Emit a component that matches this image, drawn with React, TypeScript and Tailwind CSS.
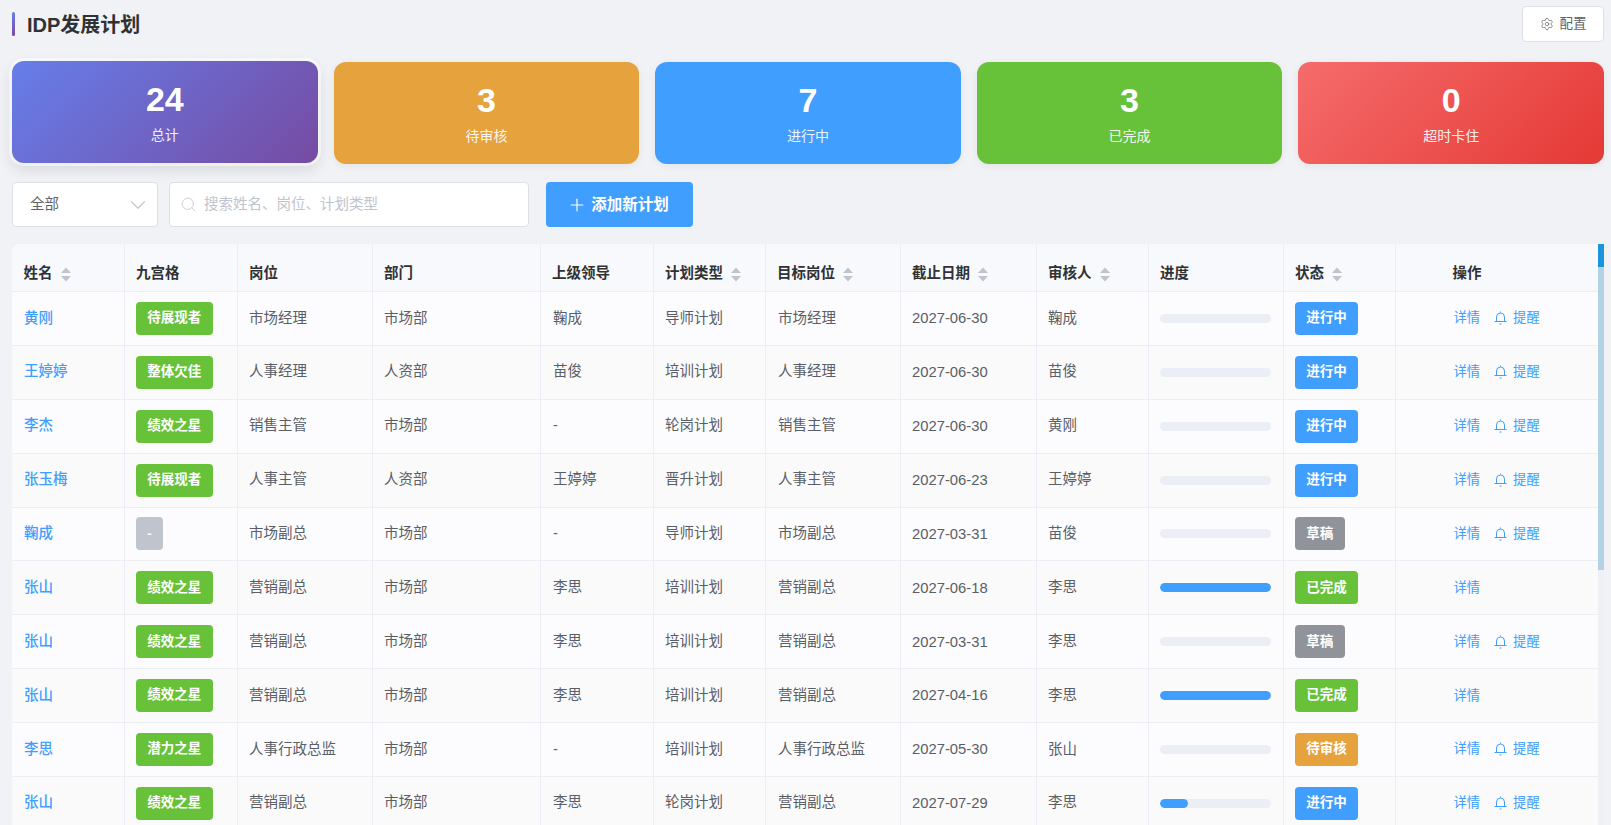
import React from 'react';
import { Settings, Search, ChevronDown, Plus } from 'lucide-react';

interface PlanRow {
  name: string;
  grid: string;
  post: string;
  dept: string;
  leader: string;
  type: string;
  target: string;
  date: string;
  reviewer: string;
  progress: number;
  status: string;
}

const rows: PlanRow[] = [
  { name: '黄刚', grid: '待展现者', post: '市场经理', dept: '市场部', leader: '鞠成', type: '导师计划', target: '市场经理', date: '2027-06-30', reviewer: '鞠成', progress: 0, status: '进行中' },
  { name: '王婷婷', grid: '整体欠佳', post: '人事经理', dept: '人资部', leader: '苗俊', type: '培训计划', target: '人事经理', date: '2027-06-30', reviewer: '苗俊', progress: 0, status: '进行中' },
  { name: '李杰', grid: '绩效之星', post: '销售主管', dept: '市场部', leader: '-', type: '轮岗计划', target: '销售主管', date: '2027-06-30', reviewer: '黄刚', progress: 0, status: '进行中' },
  { name: '张玉梅', grid: '待展现者', post: '人事主管', dept: '人资部', leader: '王婷婷', type: '晋升计划', target: '人事主管', date: '2027-06-23', reviewer: '王婷婷', progress: 0, status: '进行中' },
  { name: '鞠成', grid: '-', post: '市场副总', dept: '市场部', leader: '-', type: '导师计划', target: '市场副总', date: '2027-03-31', reviewer: '苗俊', progress: 0, status: '草稿' },
  { name: '张山', grid: '绩效之星', post: '营销副总', dept: '市场部', leader: '李思', type: '培训计划', target: '营销副总', date: '2027-06-18', reviewer: '李思', progress: 100, status: '已完成' },
  { name: '张山', grid: '绩效之星', post: '营销副总', dept: '市场部', leader: '李思', type: '培训计划', target: '营销副总', date: '2027-03-31', reviewer: '李思', progress: 0, status: '草稿' },
  { name: '张山', grid: '绩效之星', post: '营销副总', dept: '市场部', leader: '李思', type: '培训计划', target: '营销副总', date: '2027-04-16', reviewer: '李思', progress: 100, status: '已完成' },
  { name: '李思', grid: '潜力之星', post: '人事行政总监', dept: '市场部', leader: '-', type: '培训计划', target: '人事行政总监', date: '2027-05-30', reviewer: '张山', progress: 0, status: '待审核' },
  { name: '张山', grid: '绩效之星', post: '营销副总', dept: '市场部', leader: '李思', type: '轮岗计划', target: '营销副总', date: '2027-07-29', reviewer: '李思', progress: 25, status: '进行中' },
];

const statusColor: Record<string, string> = {
  进行中: 'bg-[#409eff]',
  草稿: 'bg-[#909399]',
  已完成: 'bg-[#67c23a]',
  待审核: 'bg-[#e6a23c]',
};

const columns = [
  { label: '姓名', width: 'w-[112px]', sort: true },
  { label: '九宫格', width: 'w-[113px]', sort: false },
  { label: '岗位', width: 'w-[135px]', sort: false },
  { label: '部门', width: 'w-[168px]', sort: false },
  { label: '上级领导', width: 'w-[113px]', sort: false },
  { label: '计划类型', width: 'w-[112px]', sort: true },
  { label: '目标岗位', width: 'w-[135px]', sort: true },
  { label: '截止日期', width: 'w-[136px]', sort: true },
  { label: '审核人', width: 'w-[112px]', sort: true },
  { label: '进度', width: 'w-[135px]', sort: false },
  { label: '状态', width: 'w-[112px]', sort: true },
];

const SortIcon = () => (
  <svg width="10" height="15" viewBox="0 0 10 15" className="ml-[8px] shrink-0" fill="#c0c4cc">
    <path d="M5 0.5 L10 6 L0 6 Z" />
    <path d="M5 14.5 L10 9 L0 9 Z" />
  </svg>
);

const BellIcon = () => (
  <svg width="13" height="14" viewBox="0 0 13 14" fill="none" stroke="currentColor" strokeWidth="1" className="ml-[14px] mr-[6px] shrink-0">
    <path d="M6.5 0.5v1.2" />
    <path d="M2.5 10.5V6a4 4 0 0 1 8 0v4.5" />
    <path d="M0.5 10.5h12" />
    <path d="M5.5 13h2" />
  </svg>
);

const StatCard = ({ value, label, className }: { value: number; label: string; className: string }) => (
  <div className={`flex-1 h-[102px] rounded-[12px] flex flex-col items-center text-white pt-[16px] ${className}`}>
    <div className="text-[34px] leading-[44px] font-bold">{value}</div>
    <div className="mt-[5px] text-[14px] leading-[18px] opacity-90">{label}</div>
  </div>
);

const cellBase = 'pr-[8px] text-[14.5px] text-[#5a5e66] border-r border-b border-[#ebeef5]';

export default function App() {
  return (
    <div className="h-screen overflow-hidden bg-[#f0f2f5] pl-[12px] pr-[7px] pt-[6px] font-['Liberation_Sans','Noto_Sans_CJK_SC',sans-serif]">
      <div className="flex items-center justify-between h-[36px]">
        <div className="flex items-center">
          <div className="w-[3px] h-[24px] rounded-[2px] bg-gradient-to-b from-[#667eea] to-[#764ba2]" />
          <h1 className="ml-[12px] pt-[1px] text-[20px] font-bold text-[#303133]">IDP发展计划</h1>
        </div>
        <button className="w-[82px] h-[36px] bg-white border border-[#dcdfe6] rounded-[4px] flex items-center justify-center text-[13.5px] text-[#606266]">
          <Settings size={14} strokeWidth={1.2} className="mr-[6px]" />
          配置
        </button>
      </div>

      <div className="flex gap-[16px] mt-[20px]">
        <StatCard value={24} label="总计" className="bg-[linear-gradient(135deg,#667eea,#764ba2)] -translate-y-[1px] shadow-[0_0_0_3px_rgba(255,255,255,0.55),0_6px_16px_rgba(0,0,0,0.12)]" />
        <StatCard value={3} label="待审核" className="bg-[#e6a23c] shadow-[0_2px_8px_rgba(0,0,0,0.06)]" />
        <StatCard value={7} label="进行中" className="bg-[#409eff] shadow-[0_2px_8px_rgba(0,0,0,0.06)]" />
        <StatCard value={3} label="已完成" className="bg-[#67c23a] shadow-[0_2px_8px_rgba(0,0,0,0.06)]" />
        <StatCard value={0} label="超时卡住" className="bg-[linear-gradient(135deg,#f56c6c,#e53935)] shadow-[0_2px_8px_rgba(0,0,0,0.06)]" />
      </div>

      <div className="flex items-center mt-[18px] h-[45px]">
        <div className="w-[146px] h-full bg-white border border-[#dcdfe6] rounded-[4px] flex items-center justify-between pl-[17px] pr-[6px] text-[14.5px] text-[#606266]">
          全部
          <ChevronDown size={26} strokeWidth={1} className="text-[#c0c4cc]" />
        </div>
        <div className="ml-[11px] w-[360px] h-full bg-white border border-[#dcdfe6] rounded-[4px] flex items-center pl-[10px] text-[14.5px] text-[#c0c4cc]">
          <Search size={17} strokeWidth={1.1} className="mr-[7px]" />
          搜索姓名、岗位、计划类型
        </div>
        <button className="ml-[17px] w-[147px] h-full bg-[#409eff] rounded-[4px] flex items-center justify-center pr-[3px] text-white text-[15.5px] font-bold">
          <Plus size={20} strokeWidth={1.4} className="mr-[4px]" />
          添加新计划
        </button>
      </div>

      <div className="flex mt-[17px] items-start">
        <div className="w-[1586px] shrink-0 rounded-tl-[8px] overflow-hidden">
          <table className="w-full table-fixed border-collapse bg-white">
            <colgroup>
              {columns.map((c) => (
                <col key={c.label} className={c.width} />
              ))}
              <col />
            </colgroup>
            <thead>
              <tr className="h-[47.5px] bg-[#f8f9fc]">
                {columns.map((c) => (
                  <th key={c.label} className="pl-[11.5px] pr-[4px] pt-[13px] border-r border-b border-[#ebeef5] text-left text-[14.5px] font-bold text-[#303133]">
                    <span className="flex items-center">
                      {c.label}
                      {c.sort && <SortIcon />}
                    </span>
                  </th>
                ))}
                <th className="pl-[57px] pt-[13px] border-b border-[#ebeef5] text-left text-[14.5px] font-bold text-[#303133]">操作</th>
              </tr>
            </thead>
            <tbody>
              {rows.map((row, i) => (
                <tr key={i} className={`h-[53.88px] ${i % 2 === 1 ? 'bg-[#fafafa]' : 'bg-[#fcfcfe]'}`}>
                  <td className="px-[12px] border-r border-b border-[#ebeef5] text-[14.5px] font-medium text-[#409eff]">{row.name}</td>
                  <td className="pl-[11.5px] border-r border-b border-[#ebeef5]">
                    <span className={`inline-flex items-center justify-center min-w-[27px] h-[33px] px-[11.25px] rounded-[4px] text-[13.5px] font-bold text-white align-middle ${row.grid === '-' ? 'bg-[#c0c4cc]' : 'bg-[#67c23a]'}`}>
                      {row.grid}
                    </span>
                  </td>
                  <td className={`pl-[11.5px] ${cellBase}`}>{row.post}</td>
                  <td className={`pl-[11.5px] ${cellBase}`}>{row.dept}</td>
                  <td className={`pl-[12.5px] ${cellBase}`}>{row.leader}</td>
                  <td className={`pl-[11.5px] ${cellBase}`}>{row.type}</td>
                  <td className={`pl-[12.5px] ${cellBase}`}>{row.target}</td>
                  <td className={`pl-[11.5px] ${cellBase} text-[14.8px]`}>{row.date}</td>
                  <td className={`pl-[11.5px] ${cellBase}`}>{row.reviewer}</td>
                  <td className="px-[11.5px] border-r border-b border-[#ebeef5]">
                    <div className="h-[9px] rounded-full bg-[#ebeef5] overflow-hidden">
                      <div className="h-full rounded-full bg-[#409eff]" style={{ width: `${row.progress}%` }} />
                    </div>
                  </td>
                  <td className="pl-[11.5px] border-r border-b border-[#ebeef5]">
                    <span className={`inline-flex items-center h-[33px] px-[11.25px] rounded-[4px] text-[13.5px] font-bold text-white align-middle ${statusColor[row.status]}`}>
                      {row.status}
                    </span>
                  </td>
                  <td className="pl-[58px] border-b border-[#ebeef5] text-[13.3px] text-[#409eff]">
                    <span className="flex items-center">
                      详情
                      {row.status !== '已完成' && (
                        <>
                          <BellIcon />
                          提醒
                        </>
                      )}
                    </span>
                  </td>
                </tr>
              ))}
            </tbody>
          </table>
        </div>
        <div className="w-[6px] h-[600px] bg-[#edf0f4] shrink-0">
          <div className="h-[23px] bg-[#1a94dc]" />
          <div className="h-[303px] bg-[#b5d2e4]" />
        </div>
      </div>
    </div>
  );
}
